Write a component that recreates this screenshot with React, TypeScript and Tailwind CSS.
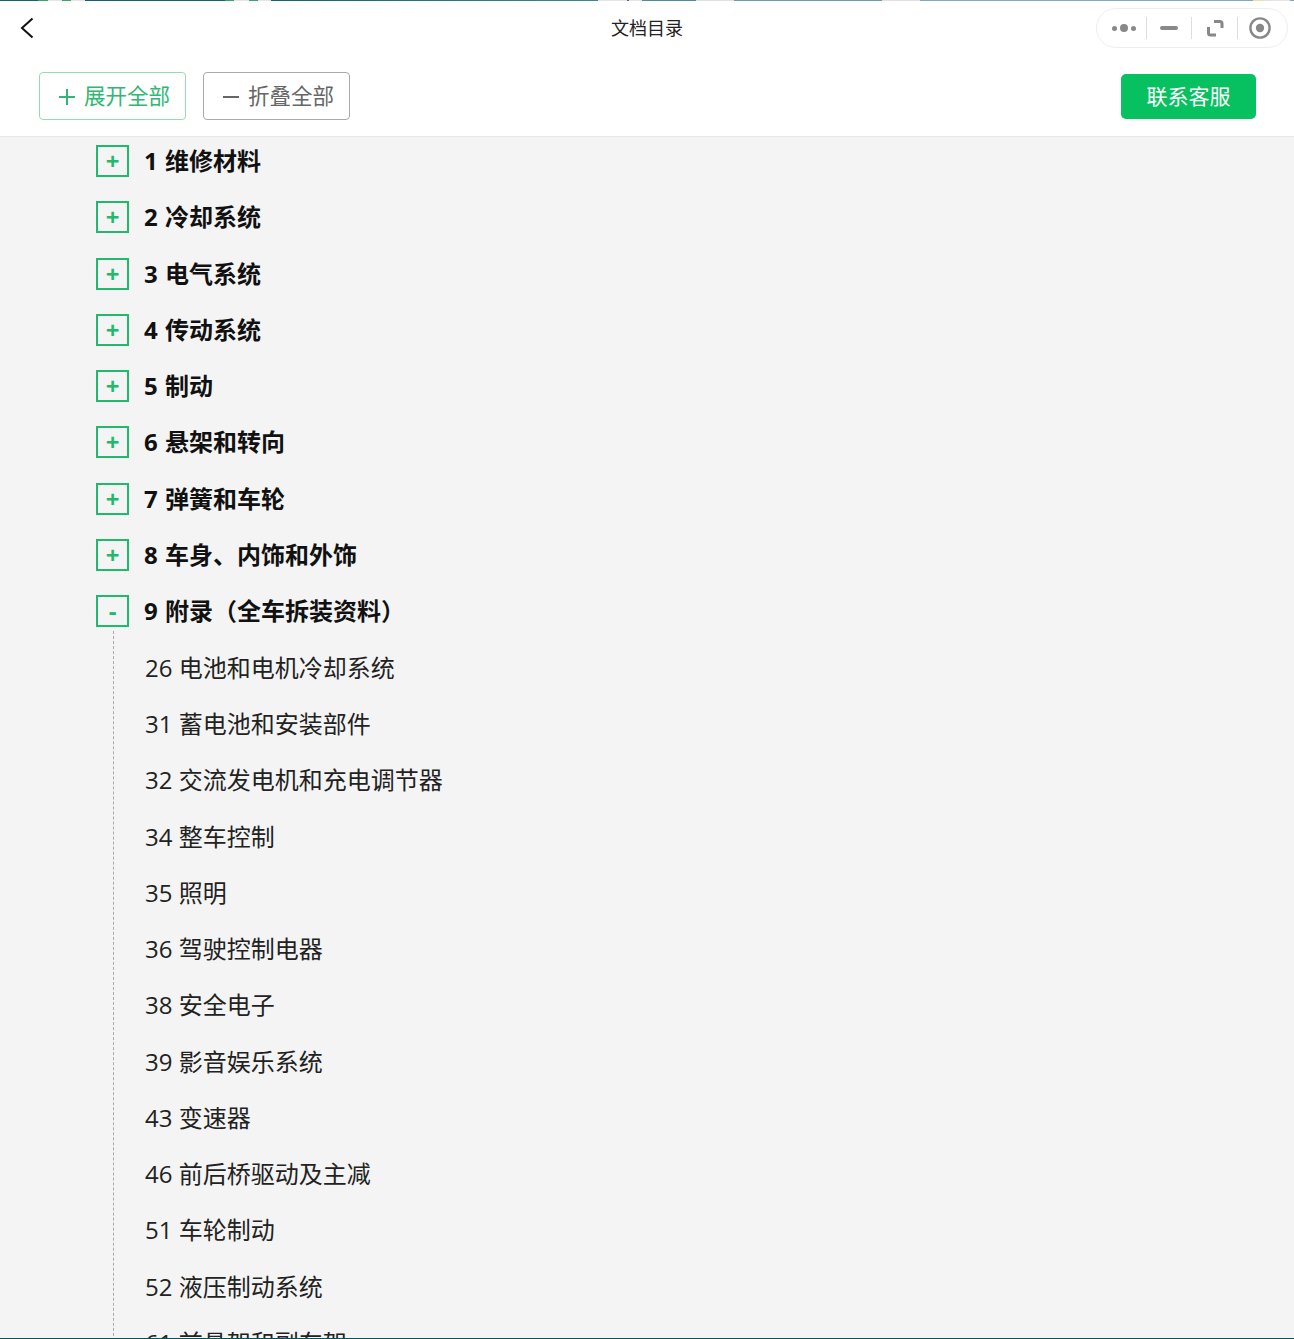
const cjk = "font-['Open_Sans','Noto_Sans_CJK_SC',sans-serif]";

const stripe = [
  "w-[38px] bg-[#17606f]",
  "w-[10px] bg-[#3aa56a]",
  "w-[14px] bg-[#e4e4e4]",
  "w-[9px] bg-[#3aa56a]",
  "w-[14px] bg-[#e4e4e4]",
  "w-[140px] bg-[#17606f]",
  "w-[9px] bg-[#3aa56a]",
  "w-[15px] bg-[#e4e4e4]",
  "w-[9px] bg-[#3aa56a]",
  "w-[13px] bg-[#e4e4e4]",
  "w-[327px] bg-gradient-to-r from-[#17606f] to-[#3f8595]",
  "w-[29px] bg-[#e4e4e4]",
  "w-[2px] bg-[#3a6fa5]",
  "w-[13px] bg-[#e4e4e4]",
  "w-[54px] bg-[#4f8d9b]",
  "w-[38px] bg-[#e0e0e0]",
  "w-[148px] bg-[#6a9eaa]",
  "w-[38px] bg-[#e0e0e0]",
  "w-[333px] bg-[#7fabb5]",
  "w-[12px] bg-[#ecdcb0]",
  "w-[25px] bg-[#e4e4e4]",
  "flex-1 bg-[#7fabb5]",
];

const chapters = [
  "1 维修材料",
  "2 冷却系统",
  "3 电气系统",
  "4 传动系统",
  "5 制动",
  "6 悬架和转向",
  "7 弹簧和车轮",
  "8 车身、内饰和外饰",
];

const sections = [
  "26 电池和电机冷却系统",
  "31 蓄电池和安装部件",
  "32 交流发电机和充电调节器",
  "34 整车控制",
  "35 照明",
  "36 驾驶控制电器",
  "38 安全电子",
  "39 影音娱乐系统",
  "43 变速器",
  "46 前后桥驱动及主减",
  "51 车轮制动",
  "52 液压制动系统",
  "61 前悬架和副车架",
];

function Capsule() {
  return (
    <div className="absolute top-[7px] right-[6px] flex h-[40px] w-[192px] items-center rounded-full border border-[#eeeeee] bg-white">
      <div className="flex h-full w-[49px] items-center justify-center gap-[3px] pl-1">
        <span className="h-[5px] w-[5px] rounded-full bg-[#888888]" />
        <span className="h-[8px] w-[8px] rounded-full bg-[#888888]" />
        <span className="h-[5px] w-[5px] rounded-full bg-[#888888]" />
      </div>
      <div className="h-[22px] w-px bg-[#dddddd]" />
      <div className="flex h-full w-[44px] items-center justify-center">
        <span className="h-[4px] w-[18px] rounded-full bg-[#888888]" />
      </div>
      <div className="h-[22px] w-px bg-[#dddddd]" />
      <div className="flex h-full w-[45px] items-center justify-center">
        <svg width="18" height="18" viewBox="0 0 18 18" fill="none" stroke="#888888" strokeWidth="3">
          <path d="M8 2.5h6a2 2 0 0 1 2 2V9" />
          <path d="M2.5 8v6a2 2 0 0 0 2 2H10" />
        </svg>
      </div>
      <div className="h-[22px] w-px bg-[#dddddd]" />
      <div className="flex h-full flex-1 items-center justify-center pr-[5px]">
        <svg width="22" height="22" viewBox="0 0 22 22" fill="none">
          <circle cx="11" cy="11" r="9.6" stroke="#888888" strokeWidth="2.4" />
          <circle cx="11" cy="11" r="4.2" fill="#888888" />
        </svg>
      </div>
    </div>
  );
}

function Toggle({ sign }: { sign: string }) {
  return (
    <span className="flex h-[32px] w-[33px] shrink-0 items-center justify-center border-2 border-[#21b96e] text-[24px] leading-none font-bold text-[#21b96e]">
      {sign}
    </span>
  );
}

function Chapter({ title, sign }: { title: string; sign: string }) {
  return (
    <div className="flex h-[56.25px] items-center gap-[15px] pl-[96px]">
      <Toggle sign={sign} />
      <span className="text-[24px] font-bold text-[#111111] [word-spacing:1px]">{title}</span>
    </div>
  );
}

export default function App() {
  return (
    <div className={`${cjk} flex h-[1339px] flex-col overflow-hidden bg-[#f4f4f4]`}>
      <div className="flex h-px shrink-0">
        {stripe.map((s, i) => (
          <span key={i} className={s} />
        ))}
      </div>
      <header className="relative h-[136px] shrink-0 border-b border-[#e8e8e8] bg-white">
        <div className="flex h-[54px] items-center justify-center text-[18px] text-[#222222]">
          <svg className="absolute top-[15px] left-[19px]" width="16" height="24" viewBox="0 0 16 24" fill="none" stroke="#111111" strokeWidth="2">
            <path d="M13.5 2.5 3 12l10.5 9.5" />
          </svg>
          文档目录
        </div>
        <Capsule />
        <div className="mt-[17px] flex items-center pr-[38px] pl-[39px]">
          <button className="flex h-[48px] w-[147px] items-center justify-center gap-[9px] rounded border border-[#92dcb5] pt-px pl-[4px] text-[21.5px] text-[#2eb872]">
            <svg width="16" height="16" viewBox="0 0 16 16" stroke="#2eb872" strokeWidth="2">
              <path d="M8 0v16M0 8h16" />
            </svg>
            展开全部
          </button>
          <button className="ml-[17px] flex h-[48px] w-[147px] items-center justify-center gap-[9px] rounded border border-[#aaaaaa] pt-px pl-[4px] text-[21.5px] text-[#666666]">
            <svg width="16" height="16" viewBox="0 0 16 16" stroke="#666666" strokeWidth="2">
              <path d="M0 8h16" />
            </svg>
            折叠全部
          </button>
          <button className="mt-[1px] ml-auto h-[45px] w-[135px] rounded-[5px] bg-[#07c160] text-[21px] text-white">
            联系客服
          </button>
        </div>
      </header>
      <main className="relative min-h-0 flex-1 overflow-hidden">
        <div className="-mt-1">
          {chapters.map((c) => (
            <Chapter key={c} title={c} sign="+" />
          ))}
          <Chapter title="9 附录（全车拆装资料）" sign="-" />
          <div className="-mt-2 ml-[113px] border-l border-dashed border-[#aaaaaa] pt-2 pl-[31px]">
            {sections.map((s) => (
              <div key={s} className="flex h-[56.25px] items-center pt-[1px] text-[24px] text-[#222222]">
                {s}
              </div>
            ))}
          </div>
        </div>
        <div className="absolute right-0 bottom-0 left-0 h-px bg-[#0f4f5a]" />
      </main>
    </div>
  );
}
